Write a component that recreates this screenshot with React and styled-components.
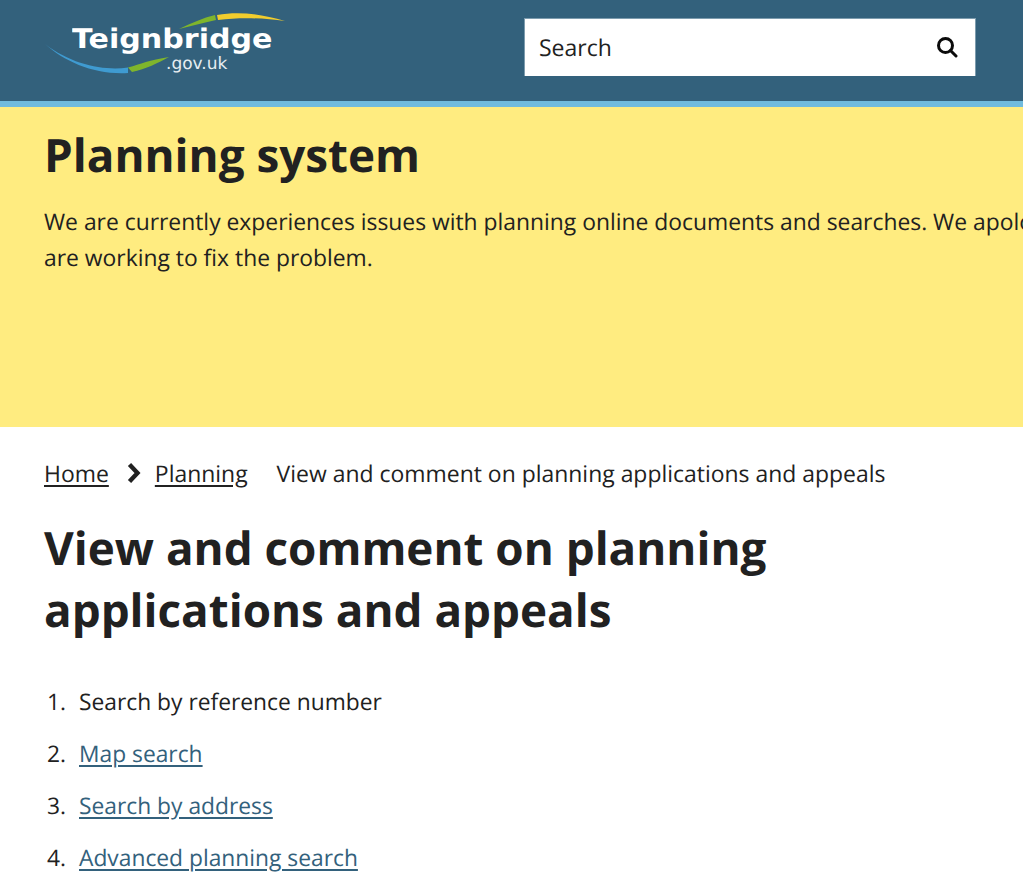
import React from 'react';
import styled, { createGlobalStyle } from 'styled-components';

const Global = createGlobalStyle`
  html, body { margin: 0; padding: 0; background: #fff; overflow-x: hidden; }
  body {
    font-family: "Open Sans", "Noto Sans", sans-serif;
    color: #212121;
    text-rendering: geometricPrecision;
  }
`;

const Page = styled.div`
  width: 1023px;
  height: 894px;
  overflow: hidden;
`;

const Header = styled.header`
  height: 101px;
  background: #33617c;
  border-bottom: 6px solid #71bbdd;
  display: flex;
  justify-content: space-between;
  padding: 0 47px 0 45px;
`;

const Logo = styled.a`
  position: relative;
  display: block;
  width: 242px;
  height: 80px;
`;

const Swoosh = styled.svg`
  position: absolute;
  left: 0;
  top: 0;
`;

const LogoName = styled.span`
  position: absolute;
  left: 27px;
  top: 24px;
  font-family: "DejaVu Sans", sans-serif;
  font-weight: 700;
  font-size: 27px;
  line-height: 32px;
  color: #fff;
  transform: scaleX(1.115);
  transform-origin: left center;
`;

const LogoDomain = styled.span`
  position: absolute;
  left: 121px;
  top: 54px;
  font-family: "DejaVu Sans", sans-serif;
  font-size: 17px;
  line-height: 20px;
  color: #e6edf1;
`;

const SearchBox = styled.div`
  margin-top: 18px;
  width: 452px;
  height: 58px;
  box-sizing: border-box;
  background: #fff;
  border: 1px solid #7d9cae;
  border-bottom: 0;
  display: flex;
  align-items: center;
  justify-content: space-between;
  padding: 0 17px 2px 14px;
  font-size: 23px;
`;

const Banner = styled.section`
  height: 320px;
  box-sizing: border-box;
  background: #ffec80;
  padding: 21px 0 0 44px;
  white-space: nowrap;
`;

const BannerTitle = styled.h2`
  margin: 0;
  font-size: 45.8px;
  line-height: 54px;
  font-weight: 700;
  color: #212121;
`;

const BannerText = styled.p`
  margin: 22px 0 0;
  font-size: 22.87px;
  line-height: 36px;
`;

const Main = styled.main`
  padding: 28px 44px 0;
`;

const Crumbs = styled.nav`
  display: flex;
  align-items: center;
  height: 36px;
  font-size: 22.95px;
  white-space: nowrap;
`;

const CrumbLink = styled.a`
  color: #212121;
  text-decoration: underline;
  text-underline-offset: 3px;
`;

const CrumbCurrent = styled.span`
  margin-left: 29px;
`;

const Chevron = styled.svg`
  margin: 0 14px 0 18px;
`;

const Title = styled.h1`
  margin: 26px 0 0;
  font-size: 45.8px;
  line-height: 62px;
  font-weight: 700;
`;

const Steps = styled.ol`
  list-style: none;
  margin: 43px 0 0;
  padding: 0;
`;

const Step = styled.li`
  display: flex;
  height: 36px;
  margin-bottom: 16px;
  font-size: 22.8px;
  line-height: 36px;
`;

const StepNumber = styled.span`
  width: 35px;
  padding-left: 3px;
  box-sizing: border-box;
`;

const StepLink = styled.a`
  color: #33617c;
  text-decoration: underline;
  text-underline-offset: 3px;
`;

const steps = [
  { label: 'Search by reference number' },
  { label: 'Map search', link: true },
  { label: 'Search by address', link: true },
  { label: 'Advanced planning search', link: true },
];

export default function App() {
  return (
    <Page>
      <Global />
      <Header>
        <Logo>
          <Swoosh width="242" height="80" viewBox="0 0 242 80" fill="none">
            <path d="M0 44 C20 62 50 75 83 73 L83 67.5 C60 71 27 65 0 44 Z" fill="#3f9bd1" />
            <path d="M83 67.5 C96 64 104 60 124 57 C113 63 101 69 87 72 Z" fill="#7fb52c" />
            <path d="M134 29 C146 23 158 18 170 15 L171 20 C158 23 146 26 134 29 Z" fill="#7fb52c" />
            <path d="M172 15 C194 11 216 14 240 21 C218 18 196 17 173 20 Z" fill="#f2cd2d" />
          </Swoosh>
          <LogoName>Teignbridge</LogoName>
          <LogoDomain>.gov.uk</LogoDomain>
        </Logo>
        <SearchBox>
          <span>Search</span>
          <svg width="22" height="22" viewBox="0 0 22 22" fill="none" stroke="#0b0b0b" strokeWidth="3">
            <circle cx="9.5" cy="9.5" r="7" />
            <path d="M14.5 14.5 L20 20" strokeLinecap="round" />
          </svg>
        </SearchBox>
      </Header>
      <Banner>
        <BannerTitle>Planning system</BannerTitle>
        <BannerText>
          We are currently experiences issues with planning online documents and searches. We apologise and
          <br />
          are working to fix the problem.
        </BannerText>
      </Banner>
      <Main>
        <Crumbs>
          <CrumbLink>Home</CrumbLink>
          <Chevron width="14" height="22" viewBox="0 0 14 22" fill="none" stroke="#212121" strokeWidth="4.4">
            <path d="M2.5 2.5 L10.5 11 L2.5 19.5" />
          </Chevron>
          <CrumbLink>Planning</CrumbLink>
          <CrumbCurrent>View and comment on planning applications and appeals</CrumbCurrent>
        </Crumbs>
        <Title>
          View and comment on planning
          <br />
          applications and appeals
        </Title>
        <Steps>
          {steps.map((step, i) => (
            <Step key={step.label}>
              <StepNumber>{i + 1}.</StepNumber>
              {step.link ? <StepLink>{step.label}</StepLink> : <span>{step.label}</span>}
            </Step>
          ))}
        </Steps>
      </Main>
    </Page>
  );
}
